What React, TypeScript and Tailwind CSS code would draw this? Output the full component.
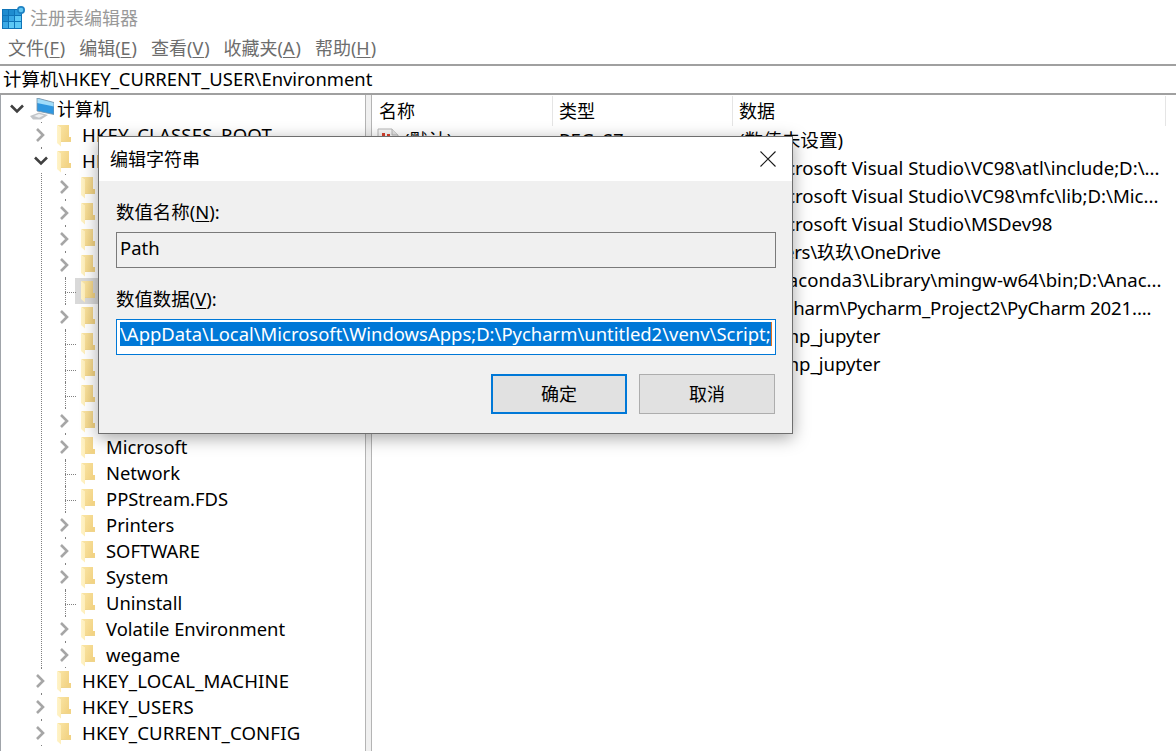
import React from 'react';

const UI_FONT = "font-['Noto_Sans','Noto_Sans_CJK_SC',sans-serif]";

interface TreeRow {
  label: string;
  level: 0 | 1;
  state: 'closed' | 'open' | 'leaf';
  selected?: boolean;
}

const closed = (label: string, level: 0 | 1 = 1): TreeRow => ({ label, level, state: 'closed' });
const leaf = (label: string): TreeRow => ({ label, level: 1, state: 'leaf' });

const treeRows: TreeRow[] = [
  closed('HKEY_CLASSES_ROOT', 0),
  { label: 'HKEY_CURRENT_USER', level: 0, state: 'open' },
  closed('AppEvents'),
  closed('Console'),
  closed('Control Panel'),
  closed('EUDC'),
  { label: 'Environment', level: 1, state: 'leaf', selected: true },
  closed('Keyboard Layout'),
  leaf('Local'),
  leaf('LocalLow'),
  leaf('MediaPlayer'),
  closed('Mine'),
  closed('Microsoft'),
  leaf('Network'),
  leaf('PPStream.FDS'),
  closed('Printers'),
  closed('SOFTWARE'),
  closed('System'),
  leaf('Uninstall'),
  closed('Volatile Environment'),
  closed('wegame'),
  closed('HKEY_LOCAL_MACHINE', 0),
  closed('HKEY_USERS', 0),
  closed('HKEY_CURRENT_CONFIG', 0),
];

const valueRows = [
  { name: '(默认)', data: '(数值未设置)', fit: '' },
  { name: 'INCLUDE', data: 'D:\\Microsoft Visual Studio\\VC98\\atl\\include;D:\\...', fit: '' },
  { name: 'LIB', data: 'D:\\Microsoft Visual Studio\\VC98\\mfc\\lib;D:\\Mic...', fit: '' },
  { name: 'MSDevDir', data: 'D:\\Microsoft Visual Studio\\MSDev98', fit: '' },
  { name: 'OneDrive', data: 'C:\\Users\\玖玖\\OneDrive', fit: 'tracking-[-0.25px]' },
  { name: 'Path', data: 'D:\\Anaconda3\\Library\\mingw-w64\\bin;D:\\Anac...', fit: '' },
  { name: 'PyCharm', data: 'D:\\Pycharm\\Pycharm_Project2\\PyCharm 2021....', fit: 'tracking-[-0.15px]' },
  { name: 'TEMP', data: 'D:\\temp_jupyter', fit: '' },
  { name: 'TMP', data: 'D:\\temp_jupyter', fit: '' },
];

const Chevron = ({ open }: { open?: boolean }) => (
  <svg width="14" height="14" viewBox="0 0 14 14" fill="none">
    {open ? (
      <path d="M1 3.5l6 6 6-6" stroke="#404040" strokeWidth="2.6" />
    ) : (
      <path d="M3 1l6 6-6 6" stroke="#a6a6a6" strokeWidth="2.6" />
    )}
  </svg>
);

const Folder = () => (
  <svg width="14" height="22" viewBox="0 0 14 22" className="block shrink-0">
    <defs>
      <linearGradient id="folder-back" x1="0" y1="0" x2="1" y2="0.4">
        <stop offset="0" stopColor="#fbe7a8" />
        <stop offset="1" stopColor="#f2d384" />
      </linearGradient>
      <linearGradient id="folder-front" x1="0" y1="0" x2="1" y2="0">
        <stop offset="0" stopColor="#fff3c8" />
        <stop offset="1" stopColor="#fbe296" />
      </linearGradient>
    </defs>
    <path d="M0 0H12V12H14V16H4V3z" fill="url(#folder-back)" />
    <path d="M0 0L4 3V16H14V16.8H4V21.5L0 18z" fill="url(#folder-front)" />
    <path d="M4 16H14V16.8H4z" fill="#eccf80" />
  </svg>
);

const ComputerIcon = () => (
  <svg width="24" height="22" viewBox="0 0 24 22" className="block shrink-0">
    <path d="M7 0l17 4.500v12L7 13z" fill="#2f97e0" />
    <path d="M7 0l17 4.500v4L7 5z" fill="#9fdcfa" />
    <path d="M7 0l17 4.500v12L7 13z" fill="none" stroke="#7c93a6" strokeWidth="0.8" />
    <path d="M0 18l9-3.500 9 2.500-7 4.500H3z" fill="#c2c5c9" />
    <path d="M4 18l5-2 5 1.300-5 2.400z" fill="#eef0f2" />
  </svg>
);

const AppIcon = () => (
  <svg width="24" height="24" viewBox="0 0 24 24" className="block shrink-0">
    <rect x="0" y="3" width="20" height="20" fill="#0f74b8" />
    <g fill="#1e8ccf">
      <rect x="1" y="4" width="5" height="5" />
      <rect x="7" y="4" width="5" height="5" />
      <rect x="1" y="10" width="5" height="5" />
    </g>
    <g fill="#3aa9e6">
      <rect x="13" y="4" width="6" height="5" fill="#2b9bdc" />
      <rect x="7" y="10" width="5" height="5" />
      <rect x="1" y="16" width="5" height="6" />
    </g>
    <g fill="#5cc8f5">
      <rect x="13" y="10" width="6" height="5" />
      <rect x="7" y="16" width="5" height="6" />
      <rect x="13" y="16" width="6" height="6" />
    </g>
    <circle cx="19" cy="4" r="4" fill="#1f83c4" />
    <circle cx="19" cy="4" r="2.300" fill="#62c6f2" />
  </svg>
);

const ValueIcon = () => (
  <svg width="22" height="24" viewBox="0 0 22 24" className="block shrink-0">
    <path d="M1 1h14l6 6v16H1z" fill="#f8f8f8" stroke="#b8b8b8" />
    <path d="M15 1v6h6" fill="#e4e4e4" stroke="#b8b8b8" />
    <rect x="5" y="5" width="3" height="5" fill="#d9412f" />
    <rect x="10" y="6" width="3" height="4" fill="#d9412f" />
  </svg>
);

const MenuItem = ({ label, hot }: { label: string; hot: string }) => (
  <span>
    {label}(<span className="tracking-[1px] underline underline-offset-2">{hot}</span>)
  </span>
);

const Row = ({ row }: { row: TreeRow }) => {
  const indent = row.level === 0 ? 'pl-[33px]' : 'pl-[57px]';
  const dotX = row.level === 0 ? 'left-[40px]' : 'left-[64px]';
  const text = row.level === 0 ? 'text-[18.6px] tracking-[0.15px]' : 'text-[18.4px]';
  return (
    <div className={`relative flex h-[26px] items-center ${text} ${indent}`}>
      {row.selected && <span className="absolute inset-y-0 left-[74px] right-0 bg-[#d9d9d9]" />}
      <span className="relative flex w-[14px] justify-center">
        {row.state !== 'leaf' && <Chevron open={row.state === 'open'} />}
      </span>
      {row.state === 'leaf' ? (
        <>
          <span className="absolute inset-y-0 left-[64px] border-l border-dotted border-[#808080]" />
          <span className="absolute left-[64px] top-[14px] w-[11px] border-t border-dotted border-[#808080]" />
        </>
      ) : (
        <>
          <span className={`absolute top-0 h-px w-px bg-[#808080] ${dotX}`} />
          <span className={`absolute bottom-0 h-px w-px bg-[#808080] ${dotX}`} />
        </>
      )}
      <span className="relative ml-[9px] mt-[2px]">
        <Folder />
      </span>
      <span className="relative ml-[11px] whitespace-nowrap">{row.label}</span>
    </div>
  );
};

const Dialog = () => (
  <div className="absolute left-[98px] top-[136px] h-[298px] w-[695px] border border-[#6e6e6e] bg-[#f0f0f0] shadow-[0_4px_16px_rgba(0,0,0,0.35)]">
    <div className="flex h-[44px] items-center justify-between bg-white pl-[11px] pr-[16px]">
      <span>编辑字符串</span>
      <svg width="16" height="16" viewBox="0 0 16 16" fill="none">
        <path d="M0.5 0.5l15 15M15.5 0.5l-15 15" stroke="#1a1a1a" strokeWidth="1.100" />
      </svg>
    </div>
    <div className="flex flex-col px-[17px] text-[18.45px]">
      <label className="mt-[18px] h-[26px] leading-[26px]">
        数值名称(<span className="underline underline-offset-2">N</span>):
      </label>
      <div className="mt-[7px] flex h-[36px] w-[660px] items-center border border-[#7a7a7a] pb-[5px] pl-[3px]">Path</div>
      <label className="mt-[18px] h-[26px] leading-[26px]">
        数值数据(<span className="underline underline-offset-2">V</span>):
      </label>
      <div className="mt-[7px] flex h-[36px] w-[660px] items-start overflow-hidden border border-[#0078d7] bg-white pl-[3px] pt-[2px]">
        <span className="h-[24px] whitespace-nowrap bg-[#0078d7] leading-[24px] text-white">
          \AppData\Local\Microsoft\WindowsApps;D:\Pycharm\untitled2\venv\Script;
        </span>
        <span className="h-[24px] w-px bg-[#e07020]" />
      </div>
      <div className="mt-[19px] flex justify-end gap-[12px] text-[18px]">
        <button className="h-[40px] w-[136px] border-2 border-[#0078d7] bg-[#e1e1e1]">确定</button>
        <button className="h-[40px] w-[136px] border border-[#adadad] bg-[#e1e1e1]">取消</button>
      </div>
    </div>
  </div>
);

export default function App() {
  return (
    <div className={`relative flex h-[751px] w-[1176px] flex-col overflow-hidden bg-white text-[18px] leading-[26px] text-black ${UI_FONT}`}>
      {/* Title bar */}
      <div className="flex h-[36px] flex-none items-center gap-[4px] pl-[2px] text-[#999999]">
        <AppIcon />
        <span>注册表编辑器</span>
      </div>

      {/* Menu */}
      <div className="flex h-[28px] flex-none items-center gap-[14px] pb-[4px] pl-[8px] text-[#6d6d6d]">
        <MenuItem label="文件" hot="F" />
        <MenuItem label="编辑" hot="E" />
        <MenuItem label="查看" hot="V" />
        <MenuItem label="收藏夹" hot="A" />
        <MenuItem label="帮助" hot="H" />
      </div>

      {/* Address */}
      <div className="flex h-[31px] flex-none items-center border-y-2 border-[#a0a0a0] pb-[2px] pl-[3px] text-[18.4px]">
        计算机\HKEY_CURRENT_USER\Environment
      </div>

      <div className="flex min-h-0 flex-1">
        {/* Tree */}
        <div className="relative w-[365px] flex-none overflow-hidden border-l border-[#a0a4aa] pt-[1px]">
          <span className="absolute bottom-[83px] left-[40px] top-[78px] border-l border-dotted border-[#808080]" />
          <div className="flex h-[26px] items-center pl-[9px]">
            <span className="flex w-[14px] justify-center">
              <Chevron open />
            </span>
            <span className="ml-[6px]">
              <ComputerIcon />
            </span>
            <span className="ml-[3px]">计算机</span>
          </div>
          {treeRows.map((row) => (
            <Row key={row.label} row={row} />
          ))}
        </div>

        {/* Splitter */}
        <div className="w-[7px] flex-none border-x border-[#b4b4b4] bg-[#f0f0f0]" />

        {/* Values */}
        <div className="min-w-0 flex-1">
          <div className="flex h-[31px] items-center pt-[1px]">
            <span className="flex h-full w-[181px] items-center border-r border-[#e5e5e5] pl-[7px]">名称</span>
            <span className="flex h-full w-[180px] items-center border-r border-[#e5e5e5] pl-[6px]">类型</span>
            <span className="flex h-full w-[433px] items-center border-r border-[#e5e5e5] pl-[6px]">数据</span>
          </div>
          {valueRows.map((row) => (
            <div key={row.name} className="flex h-[28px] items-center text-[18.6px]">
              <span className="flex w-[181px] items-center gap-[5px] pl-[5px]">
                <ValueIcon />
                {row.name}
              </span>
              <span className="w-[180px] pl-[6px]">REG_SZ</span>
              <span className={`whitespace-nowrap pl-[6px] ${row.fit}`}>{row.data}</span>
            </div>
          ))}
        </div>
      </div>

      <Dialog />
    </div>
  );
}
